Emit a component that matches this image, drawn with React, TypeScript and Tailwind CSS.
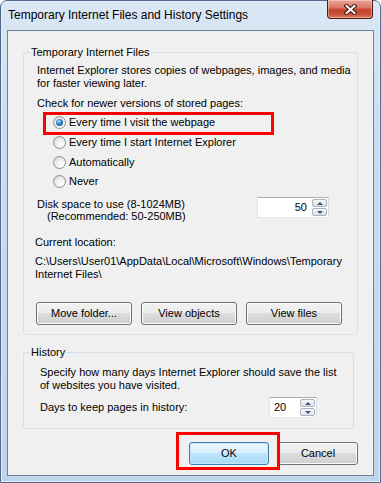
import React from "react";

const btn =
  "h-[23px] rounded-[3px] border border-[#707070] bg-[linear-gradient(to_bottom,#f2f2f2_0%,#ebebeb_50%,#dddddd_50%,#cfcfcf_100%)] shadow-[inset_0_0_0_1px_#fcfcfc] text-[11px] text-black flex items-center justify-center";

function Radio({ checked }: { checked?: boolean }) {
  return (
    <span className="w-[13px] h-[13px] shrink-0 rounded-full border border-[#8e8f8f] bg-[radial-gradient(circle_at_65%_70%,#ffffff_0%,#f4f4f4_35%,#cfcfcf_100%)] flex items-center justify-center">
      {checked && (
        <span className="w-[7px] h-[7px] rounded-full bg-[radial-gradient(circle_at_40%_35%,#a8dcff_0%,#2f80cf_45%,#0b3b70_100%)]" />
      )}
    </span>
  );
}

function Tri({ up }: { up?: boolean }) {
  return up ? (
    <span className="w-0 h-0 border-x-[3px] border-x-transparent border-b-[3px] border-b-[#3d5273]" />
  ) : (
    <span className="w-0 h-0 border-x-[3px] border-x-transparent border-t-[3px] border-t-[#3d5273]" />
  );
}

function Spinner({ value, right }: { value: string; right?: boolean }) {
  return (
    <div className="w-full h-full flex bg-white border border-[#abadb3] border-l-[#e2e3ea] border-b-[#e3e9ef] border-r-[#dbdfe6]">
      <div
        className={
          right
            ? "flex-1 flex items-center justify-end pr-[5px] text-[11px]"
            : "flex-1 flex items-center pl-[4px] text-[11px]"
        }
      >
        {value}
      </div>
      <div className="w-[16px] flex flex-col gap-[1px] py-[1px] pr-[1px]">
        <div className="flex-1 rounded-[2px] border border-[#a9b3bf] bg-[linear-gradient(to_bottom,#f5f7f9,#dde3ea)] flex items-center justify-center">
          <Tri up />
        </div>
        <div className="flex-1 rounded-[2px] border border-[#a9b3bf] bg-[linear-gradient(to_bottom,#f5f7f9,#dde3ea)] flex items-center justify-center">
          <Tri />
        </div>
      </div>
    </div>
  );
}

function CloseButton() {
  return (
    <div className="mt-[-1px] mr-[1px] w-[46px] h-[19px] rounded-b-[4px] border border-t-0 border-[#4a1c14] bg-[linear-gradient(to_bottom,#e9a597_0%,#d97c66_40%,#c4432a_55%,#c9503a_80%,#de7d62_100%)] shadow-[inset_0_0_0_1px_rgba(255,255,255,0.35)] flex items-center justify-center">
      <svg width="13" height="11" viewBox="0 0 13 11">
        <path d="M2.5 2 L10.5 9 M10.5 2 L2.5 9" stroke="#3b1510" strokeWidth="4" strokeLinecap="square" />
        <path d="M2.5 2 L10.5 9 M10.5 2 L2.5 9" stroke="#ffffff" strokeWidth="2" strokeLinecap="square" />
      </svg>
    </div>
  );
}

export default function App() {
  return (
    <div className="w-[381px] h-[483px] bg-white font-['Liberation_Sans',Arial,sans-serif] text-black">
      <div className="w-full h-full flex flex-col rounded-t-[7px] border border-[#4d6a8c] bg-[linear-gradient(to_bottom,#dbe7f5_0%,#cadbef_30%,#c2d4ea_100%)] px-[6px] pb-[6px] shadow-[inset_0_0_0_1px_#e4edf8]">
        <div className="h-[29px] flex items-start justify-between">
          <div className="pl-[1px] pt-[7px] text-[12px] leading-[15px]">
            Temporary Internet Files and History Settings
          </div>
          <CloseButton />
        </div>
        <div className="flex-1 border border-[#6f8296] bg-[#f0f0f0] flex flex-col text-[11px] leading-[13px]">
          <fieldset className="ml-[15px] mt-[14px] w-[335px] min-w-0 p-0 border border-[#d5dfe5] rounded-[3px]">
            <legend className="ml-[6px] px-[1px] leading-[15px]">Temporary Internet Files</legend>
            <div className="pl-[13px] pb-[9px]">
              <p className="mt-[4px] whitespace-nowrap">
                Internet Explorer stores copies of webpages, images, and media
                <br />
                for faster viewing later.
              </p>
              <p className="mt-[7px]">Check for newer versions of stored pages:</p>
              <div className="relative mt-[3px] pl-[16px] flex flex-col">
                <div className="h-[19px] flex items-center gap-[3px]">
                  <Radio checked />
                  <span>Every time I visit the webpage</span>
                </div>
                <div className="h-[20px] flex items-center gap-[3px]">
                  <Radio />
                  <span>Every time I start Internet Explorer</span>
                </div>
                <div className="h-[20px] flex items-center gap-[3px]">
                  <Radio />
                  <span>Automatically</span>
                </div>
                <div className="h-[19px] flex items-center gap-[3px]">
                  <Radio />
                  <span>Never</span>
                </div>
                <div className="absolute left-[6px] top-[-1px] w-[231px] h-[23px] border-[3px] border-[#ff0000]" />
              </div>
              <div className="mt-[7px] flex items-start justify-between pr-[28px]">
                <div className="leading-[12px]">
                  <div>Disk space to use (8-1024MB)</div>
                  <div className="pl-[10px]">(Recommended: 50-250MB)</div>
                </div>
                <div className="mt-[-1px] w-[72px] h-[21px]">
                  <Spinner value="50" right />
                </div>
              </div>
              <p className="mt-[14px] ml-[-2px]">Current location:</p>
              <p className="mt-[6px] ml-[-2px] whitespace-nowrap">
                {"C:\\Users\\User01\\AppData\\Local\\Microsoft\\Windows\\Temporary"}
                <br />
                {"Internet Files\\"}
              </p>
              <div className="mt-[21px] ml-[-1px] flex gap-[9px]">
                <button className={btn + " w-[96px]"}>Move folder...</button>
                <button className={btn + " w-[96px]"}>View objects</button>
                <button className={btn + " w-[96px]"}>View files</button>
              </div>
            </div>
          </fieldset>

          <fieldset className="ml-[15px] mt-[10px] w-[331px] min-w-0 p-0 border border-[#d5dfe5] rounded-[3px]">
            <legend className="ml-[6px] px-[1px] leading-[15px]">History</legend>
            <div className="pl-[16px] pb-[10px]">
              <p className="mt-[6px] whitespace-nowrap">
                Specify how many days Internet Explorer should save the list
                <br />
                of websites you have visited.
              </p>
              <div className="mt-[5px] h-[21px] flex items-center justify-between pr-[36px]">
                <span>Days to keep pages in history:</span>
                <div className="w-[48px] h-[21px]">
                  <Spinner value="20" />
                </div>
              </div>
            </div>
          </fieldset>

          <div className="mt-[13px] flex justify-end gap-[9px] pr-[15px]">
            <div className="relative">
              <button className="w-[80px] h-[23px] rounded-[3px] border border-[#3c7fb1] bg-[linear-gradient(to_bottom,#eaf6fd_0%,#d9f0fc_50%,#bee6fd_50%,#a7d9f5_100%)] shadow-[inset_0_0_0_1px_#c7e6f8] text-[11px] text-black flex items-center justify-center">
                OK
              </button>
              <div className="absolute left-[-13px] top-[-10px] w-[104px] h-[38px] border-[3px] border-[#ff0000]" />
            </div>
            <button className={btn + " w-[80px]"}>Cancel</button>
          </div>
        </div>
      </div>
    </div>
  );
}
